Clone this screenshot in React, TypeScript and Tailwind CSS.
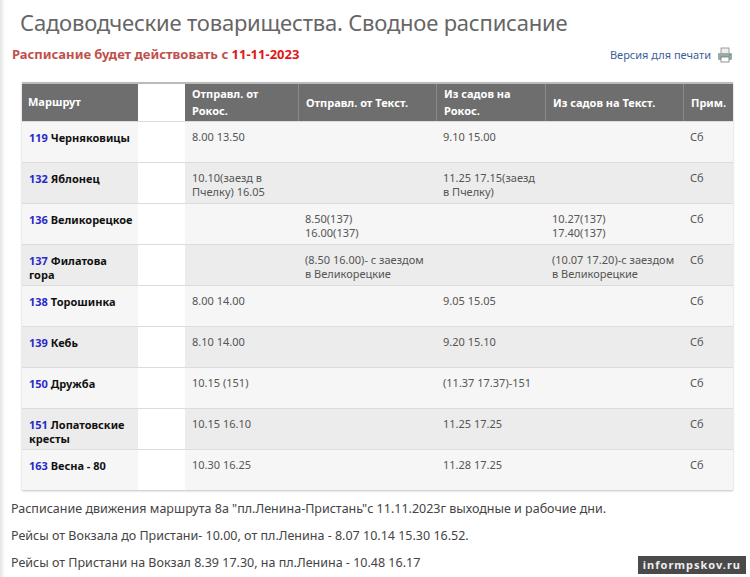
const rows: [string, string, string, string, string, string, string][] = [
  ["119", "Черняковицы", "8.00 13.50", "", "9.10 15.00", "", "Сб"],
  ["132", "Яблонец", "10.10(заезд в Пчелку) 16.05", "", "11.25 17.15(заезд в Пчелку)", "", "Сб"],
  ["136", "Великорецкое", "", "8.50(137)\n16.00(137)", "", "10.27(137)\n17.40(137)", "Сб"],
  ["137", "Филатова гора", "", "(8.50 16.00)- с заездом в Великорецкие", "", "(10.07 17.20)-с заездом в Великорецкие", "Сб"],
  ["138", "Торошинка", "8.00 14.00", "", "9.05 15.05", "", "Сб"],
  ["139", "Кебь", "8.10 14.00", "", "9.20 15.10", "", "Сб"],
  ["150", "Дружба", "10.15 (151)", "", "(11.37 17.37)-151", "", "Сб"],
  ["151", "Лопатовские кресты", "10.15 16.10", "", "11.25 17.25", "", "Сб"],
  ["163", "Весна - 80", "10.30 16.25", "", "11.28 17.25", "", "Сб"],
];

const cols = "grid-cols-[163px_113px_138px_109px_138px_50px]";

export default function App() {
  return (
    <div className="w-[750px] h-[577px] bg-white overflow-hidden relative font-['DejaVu_Sans_Condensed','Liberation_Sans_Narrow',sans-serif]">
      <div className="absolute left-0 top-0 bottom-0 w-[5px] bg-gradient-to-r from-[#e4e4e4] to-white" />
      <div className="pl-[20px] pt-[8px]">
        <div className="text-[22px] text-[#666] font-['Liberation_Sans_Narrow','DejaVu_Sans_Condensed',sans-serif] tracking-[-0.2px] leading-[28px]">Садоводческие товарищества. Сводное расписание</div>
        <div className="flex justify-between items-center mt-[9px] pr-[17px]">
          <div className="text-[13px] font-bold text-[#c0504d] ml-[-8px]">Расписание будет действовать с <span className="text-[#e01818]">11-11-2023</span></div>
          <div className="flex items-center gap-[6px] text-[11px] text-[#3a5f9a]">
            Версия для печати
            <svg width="16" height="16" viewBox="0 0 16 16"><rect x="4" y="1" width="8" height="6" fill="#eee" stroke="#888" strokeWidth="0.8"/><rect x="1" y="6" width="14" height="7" rx="1" fill="#9aa" /><rect x="4" y="10" width="8" height="5" fill="#fff" stroke="#777" strokeWidth="0.8"/><circle cx="13" cy="8" r="1" fill="#4b4"/></svg>
          </div>
        </div>
      </div>
      <div className="ml-[22px] mt-[17px] w-[711px] shadow-[0_1px_2px_rgba(0,0,0,0.25)] text-[11px]">
        <div className={`grid ${cols} bg-[#6e6e6e] text-white font-bold h-[39px] border-t-2 border-[#bbb]`}>
          <div className="px-[6px] flex items-center bg-[linear-gradient(to_right,transparent_116px,white_116px)]">Маршрут</div>
          {["Отправл. от Рокос.", "Отправл. от Текст.", "Из садов на Рокос.", "Из садов на Текст.", "Прим."].map((h, i) => (
            <div key={i} className={`px-[7px] flex items-center leading-[17px] ${i ? "border-l border-[#8a8a8a]" : ""}`}>{h}</div>
          ))}
        </div>
        {rows.map((r, i) => (
          <div key={i} className={`grid ${cols} h-[41px] border-t border-[#dcdcdc] text-[#555] leading-[14px] ${i % 2 ? "bg-[#ececec]" : "bg-[#f6f6f6]"}`}>
            <div className="pl-[7px] pt-[9px] font-bold text-[#111] bg-[linear-gradient(to_right,transparent_116px,white_116px)]">
              <div className="w-[110px] whitespace-nowrap">
                {r[1].includes(" ") && r[1] !== "Весна - 80" ? (
                  <><span className="text-[#2a2ac8]">{r[0]}</span> {r[1].split(" ")[0]}<br />{r[1].split(" ").slice(1).join(" ")}</>
                ) : (
                  <><span className="text-[#2a2ac8]">{r[0]}</span> {r[1]}</>
                )}
              </div>
            </div>
            {r.slice(2).map((c, j) => (
              <div key={j} className="px-[7px] pt-[8px] whitespace-pre-line">{c}</div>
            ))}
          </div>
        ))}
      </div>
      <div className="pl-[11px] mt-[11px] text-[12.5px] text-[#444] font-['Liberation_Sans',sans-serif] space-y-[11px] leading-[16px]">
        <div>Расписание движения маршрута 8а "пл.Ленина-Пристань"с 11.11.2023г выходные и рабочие дни.</div>
        <div>Рейсы от Вокзала до Пристани- 10.00, от пл.Ленина - 8.07 10.14 15.30 16.52.</div>
        <div>Рейсы от Пристани на Вокзал 8.39 17.30, на пл.Ленина - 10.48 16.17</div>
      </div>
      <div className="absolute right-[4px] bottom-[3px] bg-[#4a4a4a] text-[#eee] text-[11px] font-bold px-[5px] py-[1px] font-['DejaVu_Serif',serif] tracking-[1px]">informpskov.ru</div>
    </div>
  );
}
